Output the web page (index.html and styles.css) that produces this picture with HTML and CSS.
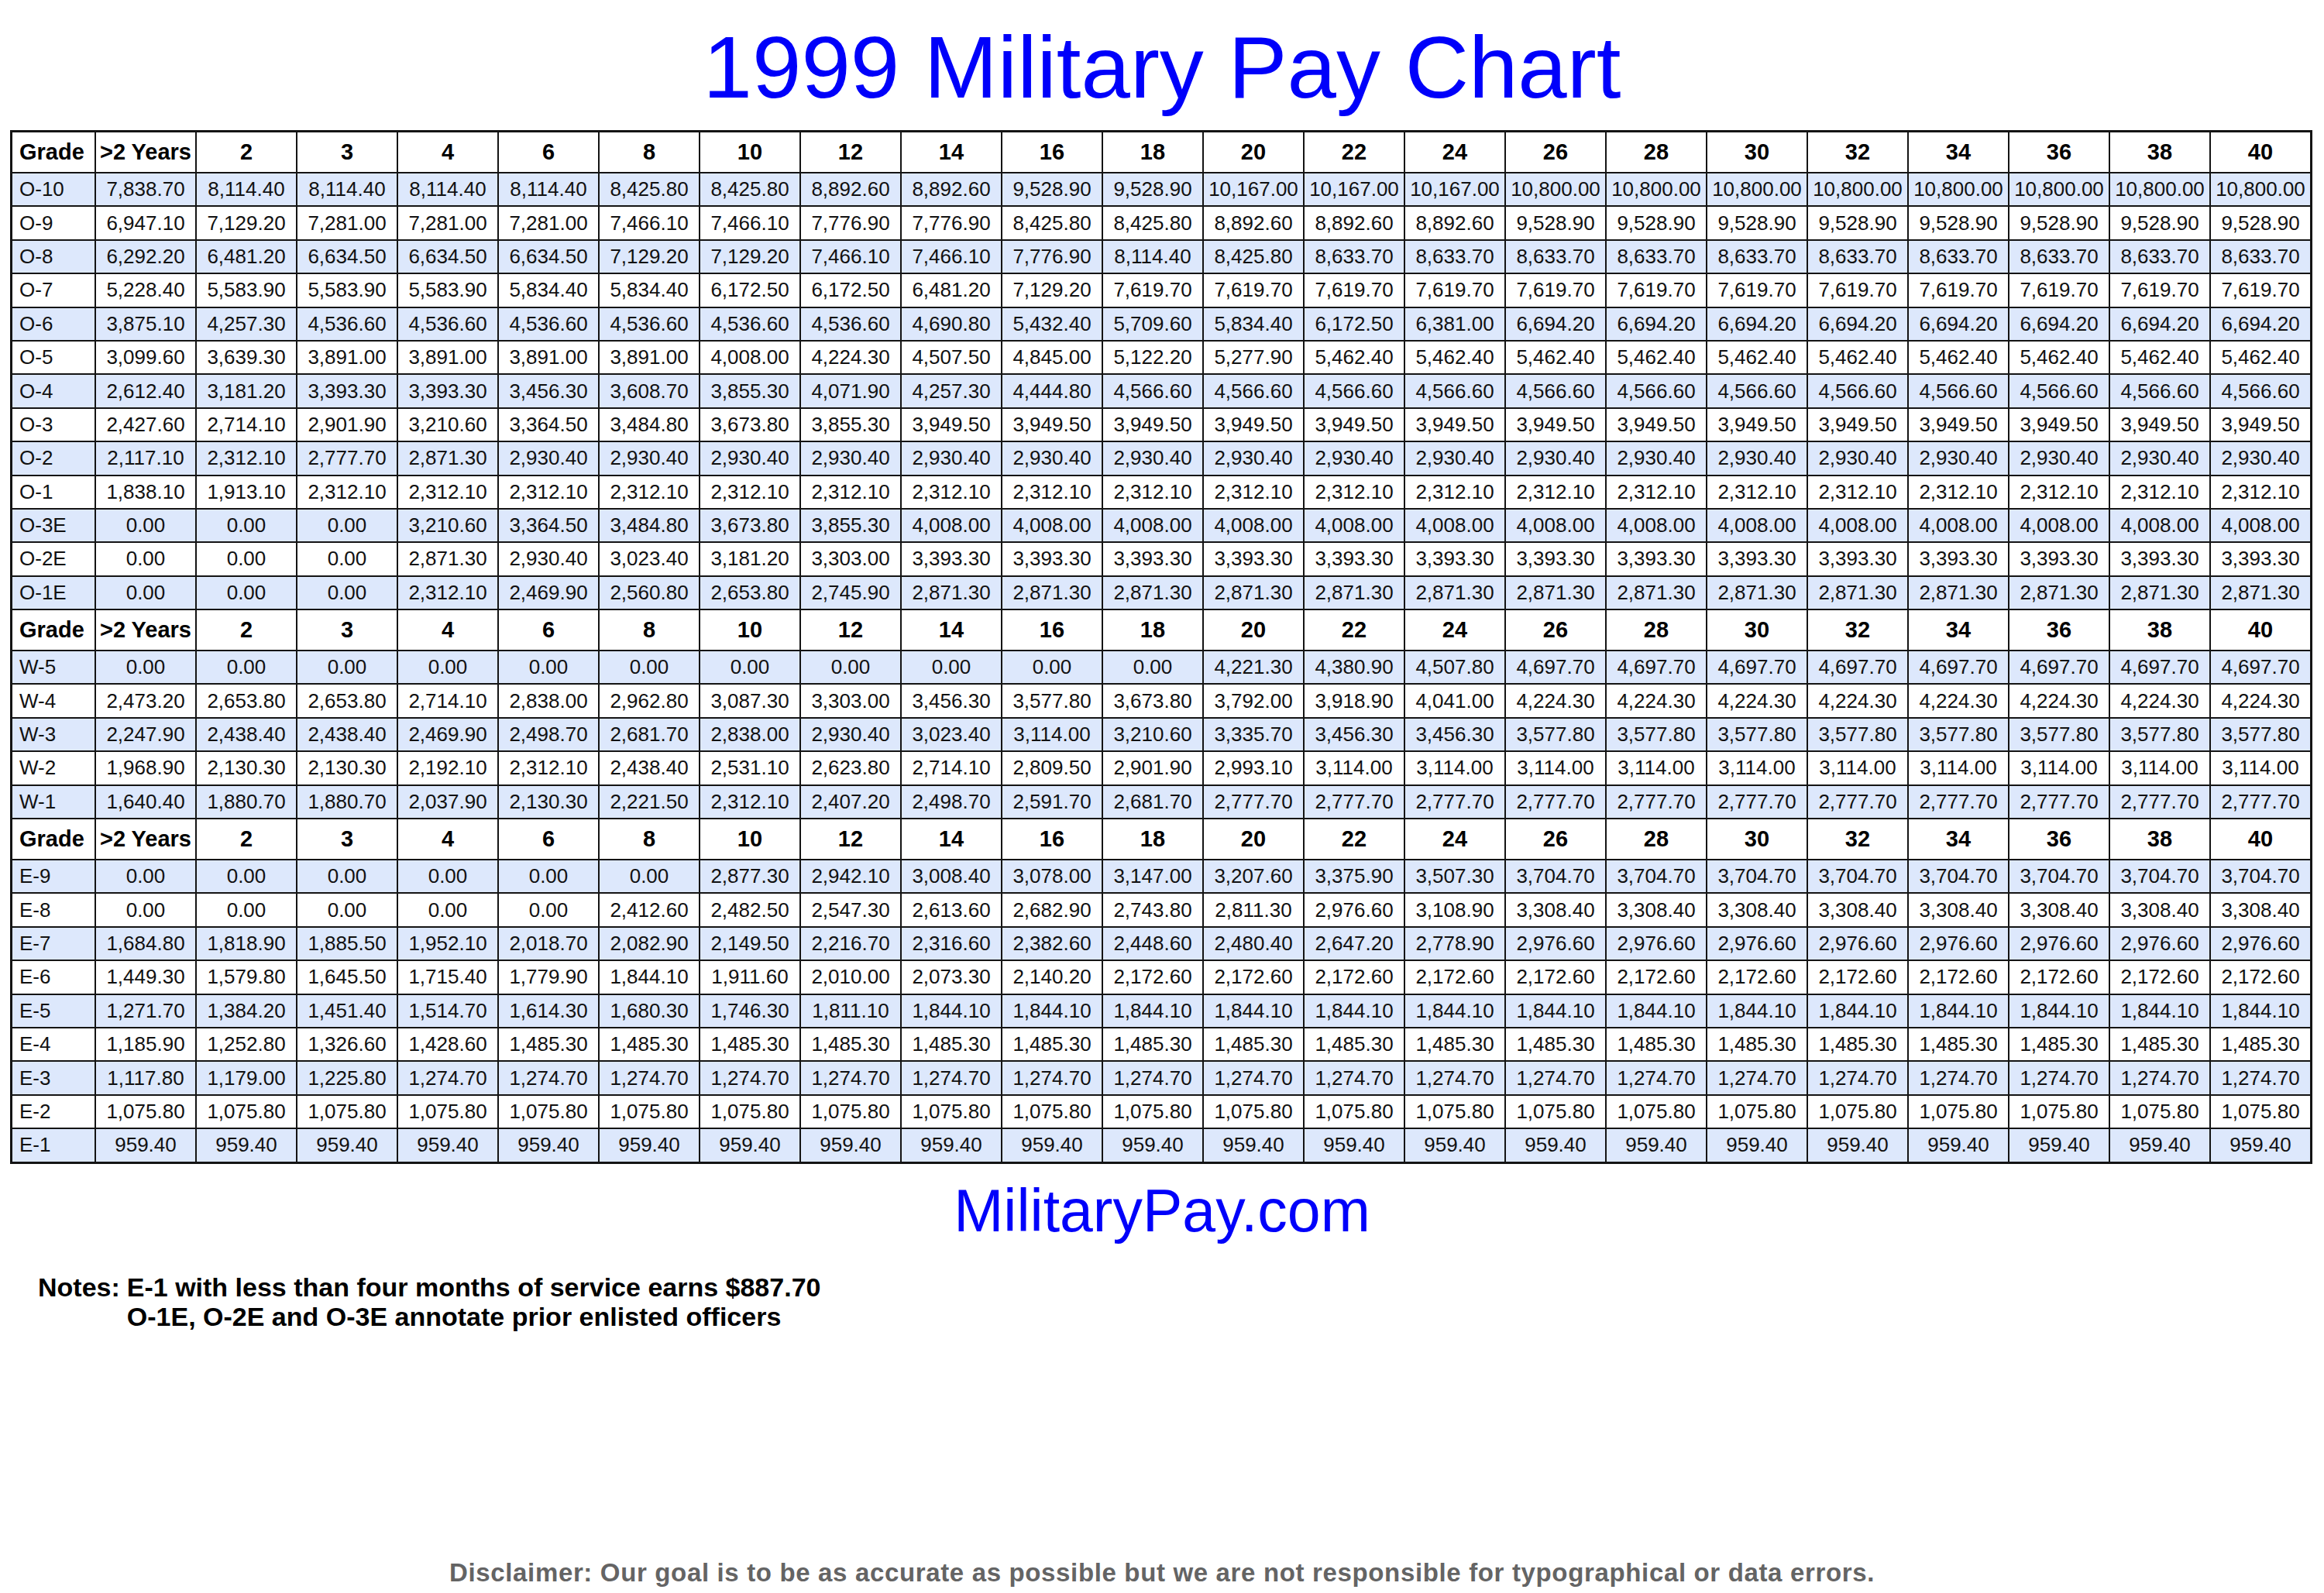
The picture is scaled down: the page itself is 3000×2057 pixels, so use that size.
FILE: index.html
```html
<!DOCTYPE html>
<html lang="en">
<head>
<meta charset="utf-8">
<title>1999 Military Pay Chart</title>
<link rel="stylesheet" href="styles.css">
</head>
<body>
<div class="page">
  <h1 class="title">1999 Military Pay Chart</h1>

  <div class="chart">
    <div class="row hdr"><span class="g">Grade</span><span>&gt;2 Years</span><span>2</span><span>3</span><span>4</span><span>6</span><span>8</span><span>10</span><span>12</span><span>14</span><span>16</span><span>18</span><span>20</span><span>22</span><span>24</span><span>26</span><span>28</span><span>30</span><span>32</span><span>34</span><span>36</span><span>38</span><span>40</span></div>
    <div class="row alt"><span class="g">O-10</span><span>7,838.70</span><span>8,114.40</span><span>8,114.40</span><span>8,114.40</span><span>8,114.40</span><span>8,425.80</span><span>8,425.80</span><span>8,892.60</span><span>8,892.60</span><span>9,528.90</span><span>9,528.90</span><span>10,167.00</span><span>10,167.00</span><span>10,167.00</span><span>10,800.00</span><span>10,800.00</span><span>10,800.00</span><span>10,800.00</span><span>10,800.00</span><span>10,800.00</span><span>10,800.00</span><span>10,800.00</span></div>
    <div class="row"><span class="g">O-9</span><span>6,947.10</span><span>7,129.20</span><span>7,281.00</span><span>7,281.00</span><span>7,281.00</span><span>7,466.10</span><span>7,466.10</span><span>7,776.90</span><span>7,776.90</span><span>8,425.80</span><span>8,425.80</span><span>8,892.60</span><span>8,892.60</span><span>8,892.60</span><span>9,528.90</span><span>9,528.90</span><span>9,528.90</span><span>9,528.90</span><span>9,528.90</span><span>9,528.90</span><span>9,528.90</span><span>9,528.90</span></div>
    <div class="row alt"><span class="g">O-8</span><span>6,292.20</span><span>6,481.20</span><span>6,634.50</span><span>6,634.50</span><span>6,634.50</span><span>7,129.20</span><span>7,129.20</span><span>7,466.10</span><span>7,466.10</span><span>7,776.90</span><span>8,114.40</span><span>8,425.80</span><span>8,633.70</span><span>8,633.70</span><span>8,633.70</span><span>8,633.70</span><span>8,633.70</span><span>8,633.70</span><span>8,633.70</span><span>8,633.70</span><span>8,633.70</span><span>8,633.70</span></div>
    <div class="row"><span class="g">O-7</span><span>5,228.40</span><span>5,583.90</span><span>5,583.90</span><span>5,583.90</span><span>5,834.40</span><span>5,834.40</span><span>6,172.50</span><span>6,172.50</span><span>6,481.20</span><span>7,129.20</span><span>7,619.70</span><span>7,619.70</span><span>7,619.70</span><span>7,619.70</span><span>7,619.70</span><span>7,619.70</span><span>7,619.70</span><span>7,619.70</span><span>7,619.70</span><span>7,619.70</span><span>7,619.70</span><span>7,619.70</span></div>
    <div class="row alt"><span class="g">O-6</span><span>3,875.10</span><span>4,257.30</span><span>4,536.60</span><span>4,536.60</span><span>4,536.60</span><span>4,536.60</span><span>4,536.60</span><span>4,536.60</span><span>4,690.80</span><span>5,432.40</span><span>5,709.60</span><span>5,834.40</span><span>6,172.50</span><span>6,381.00</span><span>6,694.20</span><span>6,694.20</span><span>6,694.20</span><span>6,694.20</span><span>6,694.20</span><span>6,694.20</span><span>6,694.20</span><span>6,694.20</span></div>
    <div class="row"><span class="g">O-5</span><span>3,099.60</span><span>3,639.30</span><span>3,891.00</span><span>3,891.00</span><span>3,891.00</span><span>3,891.00</span><span>4,008.00</span><span>4,224.30</span><span>4,507.50</span><span>4,845.00</span><span>5,122.20</span><span>5,277.90</span><span>5,462.40</span><span>5,462.40</span><span>5,462.40</span><span>5,462.40</span><span>5,462.40</span><span>5,462.40</span><span>5,462.40</span><span>5,462.40</span><span>5,462.40</span><span>5,462.40</span></div>
    <div class="row alt"><span class="g">O-4</span><span>2,612.40</span><span>3,181.20</span><span>3,393.30</span><span>3,393.30</span><span>3,456.30</span><span>3,608.70</span><span>3,855.30</span><span>4,071.90</span><span>4,257.30</span><span>4,444.80</span><span>4,566.60</span><span>4,566.60</span><span>4,566.60</span><span>4,566.60</span><span>4,566.60</span><span>4,566.60</span><span>4,566.60</span><span>4,566.60</span><span>4,566.60</span><span>4,566.60</span><span>4,566.60</span><span>4,566.60</span></div>
    <div class="row"><span class="g">O-3</span><span>2,427.60</span><span>2,714.10</span><span>2,901.90</span><span>3,210.60</span><span>3,364.50</span><span>3,484.80</span><span>3,673.80</span><span>3,855.30</span><span>3,949.50</span><span>3,949.50</span><span>3,949.50</span><span>3,949.50</span><span>3,949.50</span><span>3,949.50</span><span>3,949.50</span><span>3,949.50</span><span>3,949.50</span><span>3,949.50</span><span>3,949.50</span><span>3,949.50</span><span>3,949.50</span><span>3,949.50</span></div>
    <div class="row alt"><span class="g">O-2</span><span>2,117.10</span><span>2,312.10</span><span>2,777.70</span><span>2,871.30</span><span>2,930.40</span><span>2,930.40</span><span>2,930.40</span><span>2,930.40</span><span>2,930.40</span><span>2,930.40</span><span>2,930.40</span><span>2,930.40</span><span>2,930.40</span><span>2,930.40</span><span>2,930.40</span><span>2,930.40</span><span>2,930.40</span><span>2,930.40</span><span>2,930.40</span><span>2,930.40</span><span>2,930.40</span><span>2,930.40</span></div>
    <div class="row"><span class="g">O-1</span><span>1,838.10</span><span>1,913.10</span><span>2,312.10</span><span>2,312.10</span><span>2,312.10</span><span>2,312.10</span><span>2,312.10</span><span>2,312.10</span><span>2,312.10</span><span>2,312.10</span><span>2,312.10</span><span>2,312.10</span><span>2,312.10</span><span>2,312.10</span><span>2,312.10</span><span>2,312.10</span><span>2,312.10</span><span>2,312.10</span><span>2,312.10</span><span>2,312.10</span><span>2,312.10</span><span>2,312.10</span></div>
    <div class="row alt"><span class="g">O-3E</span><span>0.00</span><span>0.00</span><span>0.00</span><span>3,210.60</span><span>3,364.50</span><span>3,484.80</span><span>3,673.80</span><span>3,855.30</span><span>4,008.00</span><span>4,008.00</span><span>4,008.00</span><span>4,008.00</span><span>4,008.00</span><span>4,008.00</span><span>4,008.00</span><span>4,008.00</span><span>4,008.00</span><span>4,008.00</span><span>4,008.00</span><span>4,008.00</span><span>4,008.00</span><span>4,008.00</span></div>
    <div class="row"><span class="g">O-2E</span><span>0.00</span><span>0.00</span><span>0.00</span><span>2,871.30</span><span>2,930.40</span><span>3,023.40</span><span>3,181.20</span><span>3,303.00</span><span>3,393.30</span><span>3,393.30</span><span>3,393.30</span><span>3,393.30</span><span>3,393.30</span><span>3,393.30</span><span>3,393.30</span><span>3,393.30</span><span>3,393.30</span><span>3,393.30</span><span>3,393.30</span><span>3,393.30</span><span>3,393.30</span><span>3,393.30</span></div>
    <div class="row alt"><span class="g">O-1E</span><span>0.00</span><span>0.00</span><span>0.00</span><span>2,312.10</span><span>2,469.90</span><span>2,560.80</span><span>2,653.80</span><span>2,745.90</span><span>2,871.30</span><span>2,871.30</span><span>2,871.30</span><span>2,871.30</span><span>2,871.30</span><span>2,871.30</span><span>2,871.30</span><span>2,871.30</span><span>2,871.30</span><span>2,871.30</span><span>2,871.30</span><span>2,871.30</span><span>2,871.30</span><span>2,871.30</span></div>

    <div class="row hdr"><span class="g">Grade</span><span>&gt;2 Years</span><span>2</span><span>3</span><span>4</span><span>6</span><span>8</span><span>10</span><span>12</span><span>14</span><span>16</span><span>18</span><span>20</span><span>22</span><span>24</span><span>26</span><span>28</span><span>30</span><span>32</span><span>34</span><span>36</span><span>38</span><span>40</span></div>
    <div class="row alt"><span class="g">W-5</span><span>0.00</span><span>0.00</span><span>0.00</span><span>0.00</span><span>0.00</span><span>0.00</span><span>0.00</span><span>0.00</span><span>0.00</span><span>0.00</span><span>0.00</span><span>4,221.30</span><span>4,380.90</span><span>4,507.80</span><span>4,697.70</span><span>4,697.70</span><span>4,697.70</span><span>4,697.70</span><span>4,697.70</span><span>4,697.70</span><span>4,697.70</span><span>4,697.70</span></div>
    <div class="row"><span class="g">W-4</span><span>2,473.20</span><span>2,653.80</span><span>2,653.80</span><span>2,714.10</span><span>2,838.00</span><span>2,962.80</span><span>3,087.30</span><span>3,303.00</span><span>3,456.30</span><span>3,577.80</span><span>3,673.80</span><span>3,792.00</span><span>3,918.90</span><span>4,041.00</span><span>4,224.30</span><span>4,224.30</span><span>4,224.30</span><span>4,224.30</span><span>4,224.30</span><span>4,224.30</span><span>4,224.30</span><span>4,224.30</span></div>
    <div class="row alt"><span class="g">W-3</span><span>2,247.90</span><span>2,438.40</span><span>2,438.40</span><span>2,469.90</span><span>2,498.70</span><span>2,681.70</span><span>2,838.00</span><span>2,930.40</span><span>3,023.40</span><span>3,114.00</span><span>3,210.60</span><span>3,335.70</span><span>3,456.30</span><span>3,456.30</span><span>3,577.80</span><span>3,577.80</span><span>3,577.80</span><span>3,577.80</span><span>3,577.80</span><span>3,577.80</span><span>3,577.80</span><span>3,577.80</span></div>
    <div class="row"><span class="g">W-2</span><span>1,968.90</span><span>2,130.30</span><span>2,130.30</span><span>2,192.10</span><span>2,312.10</span><span>2,438.40</span><span>2,531.10</span><span>2,623.80</span><span>2,714.10</span><span>2,809.50</span><span>2,901.90</span><span>2,993.10</span><span>3,114.00</span><span>3,114.00</span><span>3,114.00</span><span>3,114.00</span><span>3,114.00</span><span>3,114.00</span><span>3,114.00</span><span>3,114.00</span><span>3,114.00</span><span>3,114.00</span></div>
    <div class="row alt"><span class="g">W-1</span><span>1,640.40</span><span>1,880.70</span><span>1,880.70</span><span>2,037.90</span><span>2,130.30</span><span>2,221.50</span><span>2,312.10</span><span>2,407.20</span><span>2,498.70</span><span>2,591.70</span><span>2,681.70</span><span>2,777.70</span><span>2,777.70</span><span>2,777.70</span><span>2,777.70</span><span>2,777.70</span><span>2,777.70</span><span>2,777.70</span><span>2,777.70</span><span>2,777.70</span><span>2,777.70</span><span>2,777.70</span></div>

    <div class="row hdr"><span class="g">Grade</span><span>&gt;2 Years</span><span>2</span><span>3</span><span>4</span><span>6</span><span>8</span><span>10</span><span>12</span><span>14</span><span>16</span><span>18</span><span>20</span><span>22</span><span>24</span><span>26</span><span>28</span><span>30</span><span>32</span><span>34</span><span>36</span><span>38</span><span>40</span></div>
    <div class="row alt"><span class="g">E-9</span><span>0.00</span><span>0.00</span><span>0.00</span><span>0.00</span><span>0.00</span><span>0.00</span><span>2,877.30</span><span>2,942.10</span><span>3,008.40</span><span>3,078.00</span><span>3,147.00</span><span>3,207.60</span><span>3,375.90</span><span>3,507.30</span><span>3,704.70</span><span>3,704.70</span><span>3,704.70</span><span>3,704.70</span><span>3,704.70</span><span>3,704.70</span><span>3,704.70</span><span>3,704.70</span></div>
    <div class="row"><span class="g">E-8</span><span>0.00</span><span>0.00</span><span>0.00</span><span>0.00</span><span>0.00</span><span>2,412.60</span><span>2,482.50</span><span>2,547.30</span><span>2,613.60</span><span>2,682.90</span><span>2,743.80</span><span>2,811.30</span><span>2,976.60</span><span>3,108.90</span><span>3,308.40</span><span>3,308.40</span><span>3,308.40</span><span>3,308.40</span><span>3,308.40</span><span>3,308.40</span><span>3,308.40</span><span>3,308.40</span></div>
    <div class="row alt"><span class="g">E-7</span><span>1,684.80</span><span>1,818.90</span><span>1,885.50</span><span>1,952.10</span><span>2,018.70</span><span>2,082.90</span><span>2,149.50</span><span>2,216.70</span><span>2,316.60</span><span>2,382.60</span><span>2,448.60</span><span>2,480.40</span><span>2,647.20</span><span>2,778.90</span><span>2,976.60</span><span>2,976.60</span><span>2,976.60</span><span>2,976.60</span><span>2,976.60</span><span>2,976.60</span><span>2,976.60</span><span>2,976.60</span></div>
    <div class="row"><span class="g">E-6</span><span>1,449.30</span><span>1,579.80</span><span>1,645.50</span><span>1,715.40</span><span>1,779.90</span><span>1,844.10</span><span>1,911.60</span><span>2,010.00</span><span>2,073.30</span><span>2,140.20</span><span>2,172.60</span><span>2,172.60</span><span>2,172.60</span><span>2,172.60</span><span>2,172.60</span><span>2,172.60</span><span>2,172.60</span><span>2,172.60</span><span>2,172.60</span><span>2,172.60</span><span>2,172.60</span><span>2,172.60</span></div>
    <div class="row alt"><span class="g">E-5</span><span>1,271.70</span><span>1,384.20</span><span>1,451.40</span><span>1,514.70</span><span>1,614.30</span><span>1,680.30</span><span>1,746.30</span><span>1,811.10</span><span>1,844.10</span><span>1,844.10</span><span>1,844.10</span><span>1,844.10</span><span>1,844.10</span><span>1,844.10</span><span>1,844.10</span><span>1,844.10</span><span>1,844.10</span><span>1,844.10</span><span>1,844.10</span><span>1,844.10</span><span>1,844.10</span><span>1,844.10</span></div>
    <div class="row"><span class="g">E-4</span><span>1,185.90</span><span>1,252.80</span><span>1,326.60</span><span>1,428.60</span><span>1,485.30</span><span>1,485.30</span><span>1,485.30</span><span>1,485.30</span><span>1,485.30</span><span>1,485.30</span><span>1,485.30</span><span>1,485.30</span><span>1,485.30</span><span>1,485.30</span><span>1,485.30</span><span>1,485.30</span><span>1,485.30</span><span>1,485.30</span><span>1,485.30</span><span>1,485.30</span><span>1,485.30</span><span>1,485.30</span></div>
    <div class="row alt"><span class="g">E-3</span><span>1,117.80</span><span>1,179.00</span><span>1,225.80</span><span>1,274.70</span><span>1,274.70</span><span>1,274.70</span><span>1,274.70</span><span>1,274.70</span><span>1,274.70</span><span>1,274.70</span><span>1,274.70</span><span>1,274.70</span><span>1,274.70</span><span>1,274.70</span><span>1,274.70</span><span>1,274.70</span><span>1,274.70</span><span>1,274.70</span><span>1,274.70</span><span>1,274.70</span><span>1,274.70</span><span>1,274.70</span></div>
    <div class="row"><span class="g">E-2</span><span>1,075.80</span><span>1,075.80</span><span>1,075.80</span><span>1,075.80</span><span>1,075.80</span><span>1,075.80</span><span>1,075.80</span><span>1,075.80</span><span>1,075.80</span><span>1,075.80</span><span>1,075.80</span><span>1,075.80</span><span>1,075.80</span><span>1,075.80</span><span>1,075.80</span><span>1,075.80</span><span>1,075.80</span><span>1,075.80</span><span>1,075.80</span><span>1,075.80</span><span>1,075.80</span><span>1,075.80</span></div>
    <div class="row alt"><span class="g">E-1</span><span>959.40</span><span>959.40</span><span>959.40</span><span>959.40</span><span>959.40</span><span>959.40</span><span>959.40</span><span>959.40</span><span>959.40</span><span>959.40</span><span>959.40</span><span>959.40</span><span>959.40</span><span>959.40</span><span>959.40</span><span>959.40</span><span>959.40</span><span>959.40</span><span>959.40</span><span>959.40</span><span>959.40</span><span>959.40</span></div>
  </div>

  <div class="site">MilitaryPay.com</div>

  <div class="notes">
    <span class="notes-label">Notes:</span>
    <div class="notes-lines">
      <div>E-1 with less than four months of service earns $887.70</div>
      <div>O-1E, O-2E and O-3E annotate prior enlisted officers</div>
    </div>
  </div>

  <div class="disclaimer">Disclaimer: Our goal is to be as accurate as possible but we are not responsible for typographical or data errors.</div>
</div>
</body>
</html>
```

FILE: styles.css
```css
html, body {
  margin: 0;
  padding: 0;
  background: #ffffff;
}

body {
  font-family: "Liberation Sans", Arial, sans-serif;
  color: #000;
}

.page {
  width: 3000px;
  min-height: 2057px;
  display: flex;
  flex-direction: column;
  box-sizing: border-box;
}

.title {
  margin: 0;
  padding-top: 22px;
  font-size: 114px;
  line-height: 130px;
  font-weight: normal;
  color: #0000fa;
  text-align: center;
}

.chart {
  margin: 16px 0 0 13px;
  width: 2972px;
  box-sizing: border-box;
  padding: 3px;
  background: #141414;
  display: flex;
  flex-direction: column;
  gap: 2px;
}

.row {
  display: grid;
  grid-template-columns: 106px repeat(22, 128px);
  column-gap: 2px;
  height: 41.4px;
}

.row > span {
  background: #ffffff;
  display: flex;
  align-items: center;
  justify-content: center;
  font-size: 26px;
  color: #111;
  white-space: nowrap;
  overflow: hidden;
}

.row.alt > span {
  background: #dde8fc;
}

.row > span.g {
  justify-content: flex-start;
  padding-left: 9px;
}

.row.hdr {
  height: 51px;
}

.row.hdr > span {
  font-size: 29px;
  font-weight: bold;
  color: #000;
}

.site {
  margin-top: 16px;
  font-size: 77px;
  line-height: 88px;
  color: #0000fa;
  text-align: center;
}

.notes {
  margin-top: 36px;
  padding-left: 49px;
  display: flex;
  gap: 9px;
  font-size: 34px;
  line-height: 38px;
  font-weight: bold;
  color: #000;
}

.disclaimer {
  margin-top: auto;
  padding-bottom: 8px;
  font-size: 33px;
  line-height: 36px;
  letter-spacing: 0.65px;
  font-weight: bold;
  color: #646464;
  text-align: center;
}
```
